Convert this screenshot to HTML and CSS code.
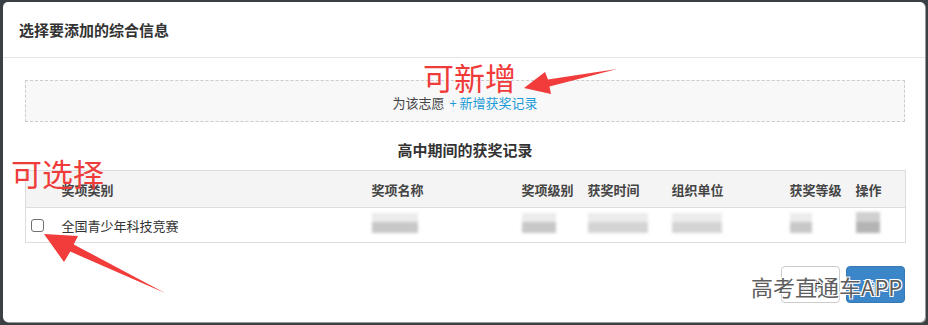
FILE: index.html
```html
<!DOCTYPE html>
<html lang="zh-CN">
<head>
  <meta charset="UTF-8" />
  <meta name="viewport" content="width=device-width, initial-scale=1.0"/>
  <title>选择要添加的综合信息</title>
  <link rel="stylesheet" href="styles.css">
</head>
<body>

  <div class="modal">
    <div class="modal-header">选择要添加的综合信息</div>

    <div class="modal-body">
      <div class="add-box">
        为该志愿 <a href="#" class="add-link">+ 新增获奖记录</a>
      </div>

      <h4 class="table-title">高中期间的获奖记录</h4>

      <table class="award-table">
        <colgroup>
          <col style="width:30px"><col style="width:310px"><col style="width:150px"><col style="width:66px">
          <col style="width:84px"><col style="width:118px"><col style="width:66px"><col style="width:56px">
        </colgroup>
        <thead>
          <tr>
            <th></th>
            <th>奖项类别</th>
            <th>奖项名称</th>
            <th>奖项级别</th>
            <th>获奖时间</th>
            <th>组织单位</th>
            <th>获奖等级</th>
            <th>操作</th>
          </tr>
        </thead>
        <tbody>
          <tr>
            <td><span class="check"></span></td>
            <td>全国青少年科技竞赛</td>
            <td><span class="blur" style="width:46px"></span></td>
            <td><span class="blur" style="width:34px"></span></td>
            <td><span class="blur blur-wide" style="width:60px"></span></td>
            <td><span class="blur blur-wide" style="width:50px"></span></td>
            <td><span class="blur" style="width:22px"></span></td>
            <td><span class="blur blur-dark" style="width:24px"></span></td>
          </tr>
        </tbody>
      </table>
    </div>

    <div class="modal-footer">
      <button class="btn btn-default">取消</button>
      <button class="btn btn-primary">确定</button>
      <span class="watermark">高考直通车APP</span>
    </div>
  </div>

  <!-- screenshot annotations -->
  <div class="note note-add">可新增</div>
  <div class="note note-select">可选择</div>
  <svg class="arrows" width="928" height="325" viewBox="0 0 928 325">
    <polygon points="524,88 545,72 548,79.6 617,69 549.5,86.6 551,94" fill="#f23b3b"/>
    <polygon points="44,234 78,236 73.7,244.4 165,293 70.3,251.6 64,262" fill="#f23b3b"/>
  </svg>

</body>
</html>
```

FILE: styles.css
```css
* {
  margin: 0;
  padding: 0;
  box-sizing: border-box;
  font-family: "Noto Sans CJK SC", "Liberation Sans", sans-serif;
}

body {
  background-color: #3b4044;
  width: 928px;
  height: 325px;
  overflow: hidden;
  position: relative;
}

.modal {
  width: 922px;
  height: 320px;
  margin: 2px 0 0 3px;
  background-color: #ffffff;
  border-radius: 5px;
  box-shadow: 1px 1px 0 #9a9a9a;
  position: relative;
}

.modal-header {
  height: 56px;
  padding: 0 16px;
  display: flex;
  align-items: center;
  font-size: 15px;
  font-weight: bold;
  color: #333333;
  border-bottom: 1px solid #e5e5e5;
}

.modal-body {
  padding: 22px 20px 0 22px;
}

.add-box {
  height: 42px;
  display: flex;
  justify-content: center;
  align-items: center;
  padding-top: 2px;
  border: 1px dashed #cccccc;
  background-color: #f8f8f8;
  font-size: 13px;
  color: #444444;
}

.add-link {
  color: #1e9bd7;
  text-decoration: none;
  margin-left: 5px;
}

.table-title {
  margin: 18px 0 10px;
  height: 20px;
  line-height: 20px;
  text-align: center;
  font-size: 15px;
  font-weight: bold;
  color: #333333;
}

.award-table {
  width: 880px;
  table-layout: fixed;
  border-collapse: collapse;
  border: 1px solid #dddddd;
  font-size: 13px;
  color: #333333;
}

.award-table th {
  height: 37px;
  padding-left: 6px;
  text-align: left;
  font-weight: bold;
  color: #444444;
  background-color: #f4f4f4;
  border-bottom: 1px solid #dddddd;
  white-space: nowrap;
}

.award-table td {
  height: 35px;
  padding-left: 6px;
  white-space: nowrap;
  vertical-align: middle;
}

.award-table td:first-child {
  padding-left: 5px;
}

.check {
  display: block;
  width: 13px;
  height: 13px;
  border: 1px solid #707070;
  border-radius: 3px;
  background-color: #ffffff;
}

.blur {
  display: inline-block;
  height: 11px;
  margin-top: 8px;
  background-color: #c8c8c8;
  box-shadow: 0 -9px 0 #ececec;
  filter: blur(1.5px);
}

.blur-wide {
  background-color: #d4d4d4;
}

.blur-dark {
  background-color: #b4b4b4;
  box-shadow: 0 -10px 0 #d0d0d0;
}

.modal-footer {
  display: flex;
  justify-content: flex-end;
  gap: 6px;
  padding: 23px 20px 20px;
  position: relative;
}

.btn {
  width: 59px;
  height: 37px;
  border-radius: 4px;
  font-size: 13px;
  cursor: pointer;
}

.btn-default {
  background-color: #ffffff;
  border: 1px solid #cccccc;
  color: #333333;
}

.btn-primary {
  background-color: #3a86c8;
  border: 1px solid #3479b5;
  color: #ffffff;
}

.watermark {
  position: absolute;
  left: 748px;
  top: 268px;
  top: 28px;
  font-size: 22px;
  line-height: 30px;
  color: #5e5e5e;
  text-shadow: 1px 1px 0 #ffffff, -1px -1px 0 #ffffff, 1px -1px 0 #ffffff, -1px 1px 0 #ffffff;
  pointer-events: none;
}

.note {
  position: absolute;
  font-size: 31px;
  line-height: 31px;
  color: #f03b3b;
}

.note-add {
  left: 423px;
  top: 61px;
}

.note-select {
  left: 11px;
  top: 157px;
}

.arrows {
  position: absolute;
  left: 0;
  top: 0;
  pointer-events: none;
}
```
